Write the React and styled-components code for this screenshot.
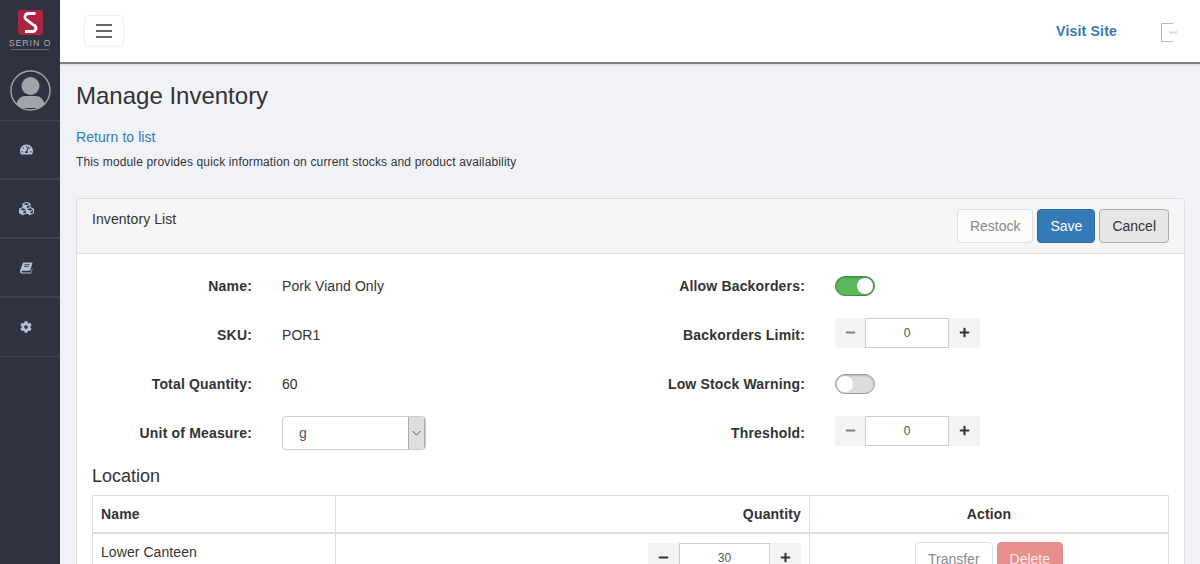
import React from 'react';
import styled, { createGlobalStyle } from 'styled-components';
import { FaTachometerAlt, FaCubes, FaCog, FaMinus, FaPlus } from 'react-icons/fa';

const GlobalStyle = createGlobalStyle`
  html, body {
    margin: 0;
    padding: 0;
    height: 564px;
    overflow: hidden;
    background: #f1f2f7;
  }
  body {
    font-family: "Liberation Sans", Arial, sans-serif;
    font-size: 14px;
    letter-spacing: 0.07px;
    color: #333;
  }
  * {
    box-sizing: border-box;
  }
`;

const Layout = styled.div`
  display: flex;
  width: 1200px;
  height: 564px;
  overflow: hidden;
`;

const Sidebar = styled.aside`
  width: 60px;
  flex-shrink: 0;
  background: #2f3240;
  display: flex;
  flex-direction: column;
`;

const LogoBox = styled.div`
  height: 62px;
  display: flex;
  flex-direction: column;
  align-items: center;
  padding-top: 10px;
`;

const LogoMark = styled.div`
  width: 25px;
  height: 25px;
  border-radius: 3px;
  background: #ad2440;
  display: flex;
  align-items: center;
  justify-content: center;
`;

const LogoText = styled.div`
  margin-top: 4px;
  font-size: 9px;
  line-height: 8px;
  letter-spacing: 0.8px;
  color: #a9abb2;
  white-space: nowrap;
`;

const LogoSub = styled.div`
  margin-top: 2px;
  width: 38px;
  height: 1px;
  background: #62646f;
`;

const AvatarBox = styled.div`
  height: 58px;
  display: flex;
  justify-content: center;
  padding-top: 8px;
`;

const NavList = styled.nav`
  display: flex;
  flex-direction: column;
  border-top: 1px solid #3f424f;
`;

const NavItem = styled.div`
  height: 59px;
  border-bottom: 2px solid #3f424f;
  display: flex;
  align-items: center;
  justify-content: center;
  color: #b5c0d0;
  font-size: ${p => p.$size}px;
  padding-right: 8px;
  &:last-child {
    border-bottom-width: 1px;
  }
`;

const Main = styled.div`
  flex: 1;
  min-width: 0;
  display: flex;
  flex-direction: column;
`;

const TopBar = styled.header`
  height: 64px;
  flex-shrink: 0;
  background: #fff;
  border-bottom: 2px solid #808080;
  box-shadow: 0 1px 2px rgba(0, 0, 0, 0.12);
  display: flex;
  align-items: center;
  padding: 0 21px 0 24px;
`;

const MenuButton = styled.button`
  width: 40px;
  height: 32px;
  background: #fff;
  border: 1px solid #eeeeee;
  border-radius: 4px;
  padding: 0;
  display: flex;
  flex-direction: column;
  align-items: center;
  justify-content: center;
  gap: 4px;
`;

const MenuBar = styled.span`
  width: 16px;
  height: 2px;
  background: #666;
`;

const VisitLink = styled.a`
  margin-left: auto;
  margin-right: 44px;
  font-size: 14px;
  font-weight: 700;
  letter-spacing: 0.2px;
  color: #337ab7;
`;

const LogoutBox = styled.div`
  height: 19px;
  margin-top: 2px;
`;

const Content = styled.main`
  padding: 0 15px 0 16px;
`;

const PageHeader = styled.div`
  height: 56px;
  border-bottom: 1px solid #eeeeee;
  padding-top: 16px;
`;

const Title = styled.h1`
  margin: 0;
  font-size: 24px;
  line-height: 31px;
  font-weight: 400;
  letter-spacing: 0;
  color: #333;
`;

const ReturnLink = styled.a`
  display: block;
  margin-top: 9px;
  font-size: 14px;
  line-height: 17px;
  color: #337ab7;
`;

const Description = styled.p`
  margin: 9px 0 0;
  font-size: 12px;
  line-height: 15px;
  letter-spacing: 0.15px;
  color: #333;
`;

const Panel = styled.section`
  margin-top: 28px;
  background: #fff;
  border: 1px solid #dddddd;
  border-radius: 4px;
`;

const PanelHead = styled.div`
  height: 55px;
  background: #f5f5f5;
  border-bottom: 1px solid #dddddd;
  border-radius: 3px 3px 0 0;
  display: flex;
  justify-content: space-between;
  padding: 10px 15px;
`;

const PanelTitle = styled.div`
  font-size: 14px;
  line-height: 20px;
  color: #333;
`;

const ButtonRow = styled.div`
  display: flex;
  gap: 4px;
`;

const Button = styled.button`
  height: 34px;
  padding: 0 12px;
  border-radius: 4px;
  font-family: inherit;
  font-size: 14px;
  letter-spacing: 0;
  border: 1px solid ${p => p.$border};
  background: ${p => p.$bg};
  color: ${p => p.$color};
`;

const PanelBody = styled.div`
  padding: 7px 15px 0;
`;

const FormGrid = styled.div`
  display: grid;
  grid-template-columns: 538px 1fr;
`;

const FormColumn = styled.div`
  display: flex;
  flex-direction: column;
`;

const FormRow = styled.div`
  height: 49px;
  display: flex;
  align-items: center;
`;

const FormLabel = styled.div`
  width: ${p => p.$width}px;
  flex-shrink: 0;
  text-align: right;
  font-weight: 700;
  font-size: 14px;
  letter-spacing: 0.17px;
  white-space: nowrap;
  color: #333;
`;

const FormValue = styled.div`
  margin-left: 30px;
  font-size: 14px;
  color: #333;
`;

const SelectBox = styled.div`
  margin-left: 30px;
  width: 144px;
  height: 34px;
  border: 1px solid #ccc;
  border-radius: 4px;
  display: flex;
  align-items: stretch;
  overflow: hidden;
  background: #fff;
`;

const SelectText = styled.div`
  flex: 1;
  padding-left: 16px;
  font-size: 14px;
  line-height: 32px;
  color: #555;
`;

const SelectArrow = styled.div`
  width: 17px;
  background: #dedede;
  border-left: 1px solid #aaa;
  border-right: 1px solid #aaa;
  display: flex;
  align-items: center;
  justify-content: center;
`;

const Toggle = styled.div`
  margin-left: 30px;
  width: 40px;
  height: 20px;
  border-radius: 10px;
  position: relative;
  border: 1px solid ${p => (p.$on ? '#3e8e41' : '#999')};
  background: ${p => (p.$on ? '#5cb85c' : '#ddd')};
  box-shadow: inset 0 1px 2px rgba(0, 0, 0, 0.2);
`;

const Knob = styled.span`
  position: absolute;
  top: 1px;
  ${p => (p.$on ? 'right: 1px;' : 'left: 1px;')}
  width: 16px;
  height: 16px;
  border-radius: 50%;
  background: #fff;
`;

const Stepper = styled.div`
  display: flex;
  align-items: stretch;
  height: 30px;
  margin-left: ${p => p.$ml}px;
  margin-bottom: ${p => p.$mb}px;
  background: #f3f3f3;
  border-radius: 3px;
`;

const StepButton = styled.div`
  width: ${p => p.$w}px;
  display: flex;
  align-items: center;
  justify-content: center;
  font-size: 11px;
  color: ${p => p.$color};
`;

const StepInput = styled.div`
  width: ${p => p.$w}px;
  background: #fff;
  border: 1px solid #ccc;
  text-align: center;
  font-size: 12px;
  line-height: 28px;
  color: #555;
`;

const SectionTitle = styled.h3`
  margin: 0;
  padding-top: 9px;
  font-size: 18px;
  line-height: 21px;
  font-weight: 400;
  letter-spacing: 0;
  color: #333;
`;

const TableWrap = styled.table`
  margin-top: 8px;
  width: 1076px;
  border-collapse: collapse;
  table-layout: fixed;
  font-size: 14px;
  color: #333;
`;

const HeadCell = styled.th`
  height: 37px;
  padding: 0 8px;
  border: 1px solid #ddd;
  border-bottom-width: 2px;
  text-align: ${p => p.$align};
  font-weight: 700;
  letter-spacing: 0.17px;
`;

const BodyCell = styled.td`
  height: 44px;
  padding: ${p => p.$pt}px 8px 8px;
  border: 1px solid #ddd;
  vertical-align: top;
`;

const QuantityCell = styled.div`
  display: flex;
  justify-content: flex-end;
`;

const ActionCell = styled.div`
  display: flex;
  justify-content: center;
  gap: 4px;
`;

const Logo = () => (
  <svg width="15" height="21" viewBox="0 0 15 21" fill="none" stroke="#fff">
    <path d="M12.5 2H5.5a3.4 3.4 0 0 0-2.4 5.8l8.8 6.4a3.4 3.4 0 0 1-2.4 5.8H2" strokeWidth="3" transform="translate(0 -0.5)" />
    <path d="M3 4.8l9 7.4" stroke="#ad2440" strokeWidth="0.9" />
  </svg>
);

const Avatar = () => (
  <svg width="41" height="41" viewBox="0 0 41 41">
    <defs>
      <clipPath id="avatar-clip">
        <circle cx="20.5" cy="20.5" r="19.5" />
      </clipPath>
    </defs>
    <circle cx="20.5" cy="20.5" r="19.5" fill="#2f3240" stroke="#a3a4a9" strokeWidth="1.4" />
    <circle cx="20.5" cy="16" r="9" fill="#a3a4a9" />
    <path d="M6 38c0-9 5-12 10-12h9c5 0 10 3 10 12z" fill="#a3a4a9" clipPath="url(#avatar-clip)" />
  </svg>
);

const BookIcon = () => (
  <svg width="13" height="12" viewBox="0 0 13 12" fill="#b5c0d0">
    <path d="M3 0.5h9.5l-2.3 8.3H2.7c-.8 0-1.1.4-1.1.8s.4.8 1 .8h8.3l1.2-4 .4.8-1.5 4.3H2.3C.9 11.5 0 10.6 0 9.5c0-.3 0-.6.1-.9z" />
    <path d="M4.5 2.6h5M4 4.4h5" stroke="#2f3240" strokeWidth="0.8" />
  </svg>
);

const LogoutIcon = () => (
  <svg width="18" height="19" viewBox="0 0 18 19" fill="none" stroke="#bbb" strokeWidth="1">
    <path d="M12.5 0.5H0.5V18.5H12.5" />
    <path d="M8 9.5H15" stroke="#ddd" strokeWidth="2" />
    <path d="M14.5 7.5L17 9.5L14.5 11.5" stroke="#ddd" />
  </svg>
);

const Chevron = () => (
  <svg width="9" height="6" viewBox="0 0 9 6" fill="none" stroke="#555" strokeWidth="1">
    <path d="M0.5 1L4.5 5L8.5 1" />
  </svg>
);

const QtyStepper = ({ value, ml = 30, mb = 4, left = 30, input = 84, minus = '#808080' }) => (
  <Stepper $ml={ml} $mb={mb}>
    <StepButton $w={left} $color={minus}><FaMinus /></StepButton>
    <StepInput $w={input}>{value}</StepInput>
    <StepButton $w={31} $color="#333"><FaPlus /></StepButton>
  </Stepper>
);

const App = () => (
  <>
    <GlobalStyle />
    <Layout>
      <Sidebar>
        <LogoBox>
          <LogoMark><Logo /></LogoMark>
          <LogoText>SERIN O</LogoText>
          <LogoSub />
        </LogoBox>
        <AvatarBox><Avatar /></AvatarBox>
        <NavList>
          <NavItem $size={13}><FaTachometerAlt /></NavItem>
          <NavItem $size={15}><FaCubes /></NavItem>
          <NavItem $size={12}><BookIcon /></NavItem>
          <NavItem $size={12}><FaCog /></NavItem>
        </NavList>
      </Sidebar>
      <Main>
        <TopBar>
          <MenuButton>
            <MenuBar />
            <MenuBar />
            <MenuBar />
          </MenuButton>
          <VisitLink>Visit Site</VisitLink>
          <LogoutBox><LogoutIcon /></LogoutBox>
        </TopBar>
        <Content>
          <PageHeader>
            <Title>Manage Inventory</Title>
          </PageHeader>
          <ReturnLink>Return to list</ReturnLink>
          <Description>This module provides quick information on current stocks and product availability</Description>
          <Panel>
            <PanelHead>
              <PanelTitle>Inventory List</PanelTitle>
              <ButtonRow>
                <Button $bg="#fbfbfb" $border="#e0e0e0" $color="#8a8a8a">Restock</Button>
                <Button $bg="#337ab7" $border="#2e6da4" $color="#fff">Save</Button>
                <Button $bg="#e6e6e6" $border="#adadad" $color="#333">Cancel</Button>
              </ButtonRow>
            </PanelHead>
            <PanelBody>
              <FormGrid>
                <FormColumn>
                  <FormRow>
                    <FormLabel $width={160}>Name:</FormLabel>
                    <FormValue>Pork Viand Only</FormValue>
                  </FormRow>
                  <FormRow>
                    <FormLabel $width={160}>SKU:</FormLabel>
                    <FormValue>POR1</FormValue>
                  </FormRow>
                  <FormRow>
                    <FormLabel $width={160}>Total Quantity:</FormLabel>
                    <FormValue>60</FormValue>
                  </FormRow>
                  <FormRow>
                    <FormLabel $width={160}>Unit of Measure:</FormLabel>
                    <SelectBox>
                      <SelectText>g</SelectText>
                      <SelectArrow><Chevron /></SelectArrow>
                    </SelectBox>
                  </FormRow>
                </FormColumn>
                <FormColumn>
                  <FormRow>
                    <FormLabel $width={175}>Allow Backorders:</FormLabel>
                    <Toggle $on><Knob $on /></Toggle>
                  </FormRow>
                  <FormRow>
                    <FormLabel $width={175}>Backorders Limit:</FormLabel>
                    <QtyStepper value="0" />
                  </FormRow>
                  <FormRow>
                    <FormLabel $width={175}>Low Stock Warning:</FormLabel>
                    <Toggle><Knob /></Toggle>
                  </FormRow>
                  <FormRow>
                    <FormLabel $width={175}>Threshold:</FormLabel>
                    <QtyStepper value="0" />
                  </FormRow>
                </FormColumn>
              </FormGrid>
              <SectionTitle>Location</SectionTitle>
              <TableWrap>
                <colgroup>
                  <col style={{ width: 243 }} />
                  <col style={{ width: 474 }} />
                  <col style={{ width: 359 }} />
                </colgroup>
                <thead>
                  <tr>
                    <HeadCell $align="left">Name</HeadCell>
                    <HeadCell $align="right">Quantity</HeadCell>
                    <HeadCell $align="center">Action</HeadCell>
                  </tr>
                </thead>
                <tbody>
                  <tr>
                    <BodyCell $pt={10}>Lower Canteen</BodyCell>
                    <BodyCell $pt={9}>
                      <QuantityCell>
                        <QtyStepper value="30" ml={0} mb={0} left={31} input={91} minus="#333" />
                      </QuantityCell>
                    </BodyCell>
                    <BodyCell $pt={8}>
                      <ActionCell>
                        <Button $bg="#fff" $border="#e0e0e0" $color="#8a8a8a">Transfer</Button>
                        <Button $bg="#e88e8c" $border="#e88e8c" $color="#fbeaea">Delete</Button>
                      </ActionCell>
                    </BodyCell>
                  </tr>
                </tbody>
              </TableWrap>
            </PanelBody>
          </Panel>
        </Content>
      </Main>
    </Layout>
  </>
);

export default App;
